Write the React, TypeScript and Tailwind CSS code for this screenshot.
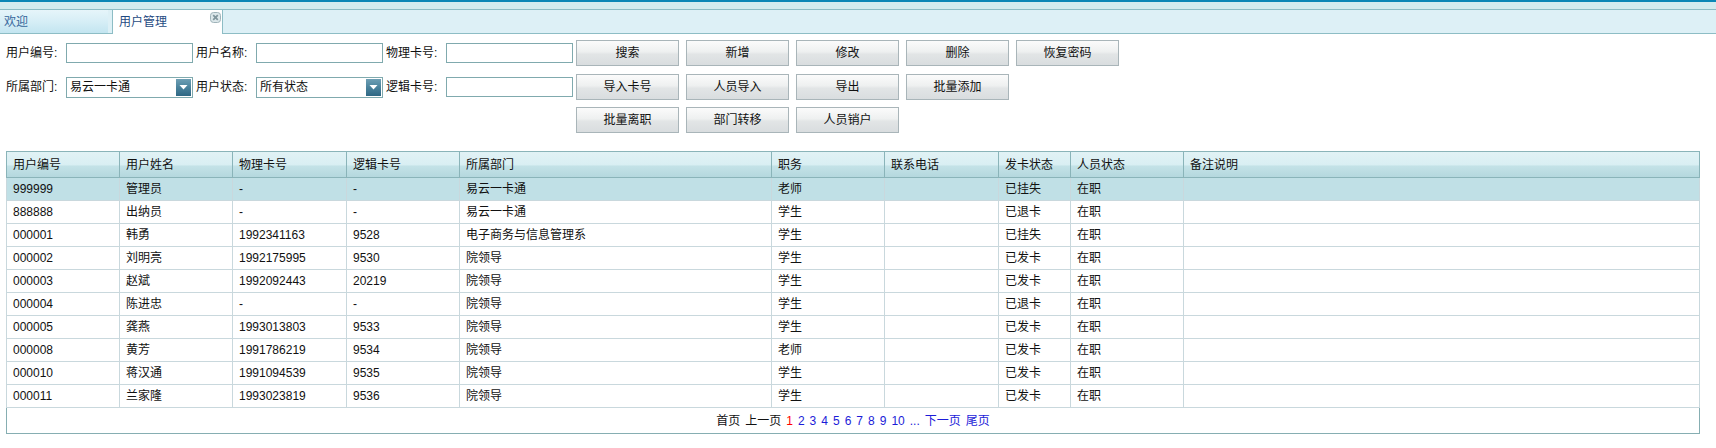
import React from "react";

const headers = ["用户编号", "用户姓名", "物理卡号", "逻辑卡号", "所属部门", "职务", "联系电话", "发卡状态", "人员状态", "备注说明"];

const rows: string[][] = [
  ["999999", "管理员", "-", "-", "易云一卡通", "老师", "", "已挂失", "在职", ""],
  ["888888", "出纳员", "-", "-", "易云一卡通", "学生", "", "已退卡", "在职", ""],
  ["000001", "韩勇", "1992341163", "9528", "电子商务与信息管理系", "学生", "", "已挂失", "在职", ""],
  ["000002", "刘明亮", "1992175995", "9530", "院领导", "学生", "", "已发卡", "在职", ""],
  ["000003", "赵斌", "1992092443", "20219", "院领导", "学生", "", "已发卡", "在职", ""],
  ["000004", "陈进忠", "-", "-", "院领导", "学生", "", "已退卡", "在职", ""],
  ["000005", "龚燕", "1993013803", "9533", "院领导", "学生", "", "已发卡", "在职", ""],
  ["000008", "黄芳", "1991786219", "9534", "院领导", "老师", "", "已发卡", "在职", ""],
  ["000010", "蒋汉通", "1991094539", "9535", "院领导", "学生", "", "已发卡", "在职", ""],
  ["000011", "兰家隆", "1993023819", "9536", "院领导", "学生", "", "已发卡", "在职", ""],
];

function Btn({ label }: { label: string }) {
  return (
    <button className="w-[103px] h-[26px] border border-[#a9b5b9] bg-[linear-gradient(to_bottom,#fbfbfb_0%,#eef0f0_45%,#e2e5e6_55%,#d9dddf_100%)] text-[12px] leading-[24px] text-[#111] text-center">
      {label}
    </button>
  );
}

function Label({ text }: { text: string }) {
  return <span className="w-[60px] text-[12px] leading-[20px] text-[#111] whitespace-nowrap">{text}</span>;
}

function Input() {
  return <div className="w-[127px] h-[20px] border border-[#80aaae] bg-white mr-[3px]" />;
}

function Select({ value }: { value: string }) {
  return (
    <div className="w-[127px] h-[21px] border border-[#80aaae] bg-white mr-[3px] flex items-center justify-between">
      <span className="pl-[3px] text-[12px] leading-[19px] text-[#111]">{value}</span>
      <div className="w-[15px] h-[17px] mr-[1px] bg-[linear-gradient(to_bottom,#6e9fb4_0%,#4a829c_50%,#2f6884_100%)] flex items-center justify-center">
        <svg width="9" height="6" viewBox="0 0 9 6">
          <path d="M0.5 1 L8.5 1 L4.5 5.5 Z" fill="#ffffff" />
        </svg>
      </div>
    </div>
  );
}

export default function App() {
  return (
    <div className="w-[1716px] h-[448px] bg-white font-['Liberation_Sans','Noto_Sans_CJK_SC',sans-serif] overflow-hidden">
      {/* top bars */}
      <div className="h-[2px] bg-[#0b87b6]" />
      <div className="h-[7px] bg-[#d3ecef]" />
      <div className="h-[25px] border-y border-[#8dbdc5] bg-[#ddf0f6] flex items-stretch">
        <div className="w-[108px] bg-[linear-gradient(to_bottom,#e6f5fa_0%,#d6eef6_50%,#c3e5f0_100%)] pl-[4px] flex items-center text-[12px] text-[#36679b]">
          欢迎
        </div>
        <div className="w-[4px]" />
        <div className="relative w-[111px] bg-white border-x border-[#8dbdc5] -mb-px pl-[6px] flex items-center text-[12px] text-[#1f4b82]">
          用户管理
          <svg className="absolute right-[1px] top-[2px]" width="11" height="11" viewBox="0 0 11 11">
            <rect x="0.5" y="0.5" width="10" height="10" rx="3" fill="#dce7ea" stroke="#9fb3b9" />
            <path d="M3.2 3.2 L7.8 7.8 M7.8 3.2 L3.2 7.8" stroke="#7f959c" strokeWidth="1.7" />
          </svg>
        </div>
      </div>

      {/* form */}
      <div className="flex mt-[6px]">
        <div className="w-[576px] pl-[6px] flex items-center">
          <Label text="用户编号:" />
          <Input />
          <Label text="用户名称:" />
          <Input />
          <Label text="物理卡号:" />
          <Input />
        </div>
        <div className="flex gap-[7px]">
          <Btn label="搜索" />
          <Btn label="新增" />
          <Btn label="修改" />
          <Btn label="删除" />
          <Btn label="恢复密码" />
        </div>
      </div>
      <div className="flex mt-[8px]">
        <div className="w-[576px] pl-[6px] flex items-center">
          <Label text="所属部门:" />
          <Select value="易云一卡通" />
          <Label text="用户状态:" />
          <Select value="所有状态" />
          <Label text="逻辑卡号:" />
          <Input />
        </div>
        <div className="flex gap-[7px]">
          <Btn label="导入卡号" />
          <Btn label="人员导入" />
          <Btn label="导出" />
          <Btn label="批量添加" />
        </div>
      </div>
      <div className="flex mt-[7px]">
        <div className="w-[576px]" />
        <div className="flex gap-[7px]">
          <Btn label="批量离职" />
          <Btn label="部门转移" />
          <Btn label="人员销户" />
        </div>
      </div>

      {/* table */}
      <table className="ml-[6px] mt-[18px] w-[1694px] table-fixed border-collapse border border-[#86aeb2] text-[12px] text-[#111]">
        <colgroup>
          <col className="w-[113px]" />
          <col className="w-[113px]" />
          <col className="w-[114px]" />
          <col className="w-[113px]" />
          <col className="w-[312px]" />
          <col className="w-[113px]" />
          <col className="w-[114px]" />
          <col className="w-[72px]" />
          <col className="w-[113px]" />
          <col />
        </colgroup>
        <thead>
          <tr className="h-[26px] bg-[linear-gradient(to_bottom,#e1f2f5_0%,#d9eff3_48%,#c3e2e7_55%,#b3d7dd_100%)]">
            {headers.map((h) => (
              <th key={h} className="border border-[#8ab4b9] text-left font-normal pl-[6px] whitespace-nowrap">
                {h}
              </th>
            ))}
          </tr>
        </thead>
        <tbody>
          {rows.map((r, i) => (
            <tr key={r[0]} className={i === 0 ? "h-[23px] bg-[#c0e0e6]" : "h-[23px] bg-white"}>
              {r.map((c, j) => (
                <td key={j} className="border border-[#c9d8dd] pl-[6px] whitespace-nowrap leading-[22px]">
                  {c}
                </td>
              ))}
            </tr>
          ))}
          <tr className="h-[26px]">
            <td colSpan={10} className="border-t border-[#86aeb2] text-center">
              <span className="text-[#111]">首页</span>
              <span className="text-[#111] ml-[5px]">上一页</span>
              <span className="text-[#ff0000] ml-[5px]">1</span>
              {["2", "3", "4", "5", "6", "7", "8", "9", "10", "...", "下一页", "尾页"].map((p) => (
                <span key={p} className="text-[#1c1cd8] ml-[5px]">
                  {p}
                </span>
              ))}
            </td>
          </tr>
        </tbody>
      </table>
    </div>
  );
}
